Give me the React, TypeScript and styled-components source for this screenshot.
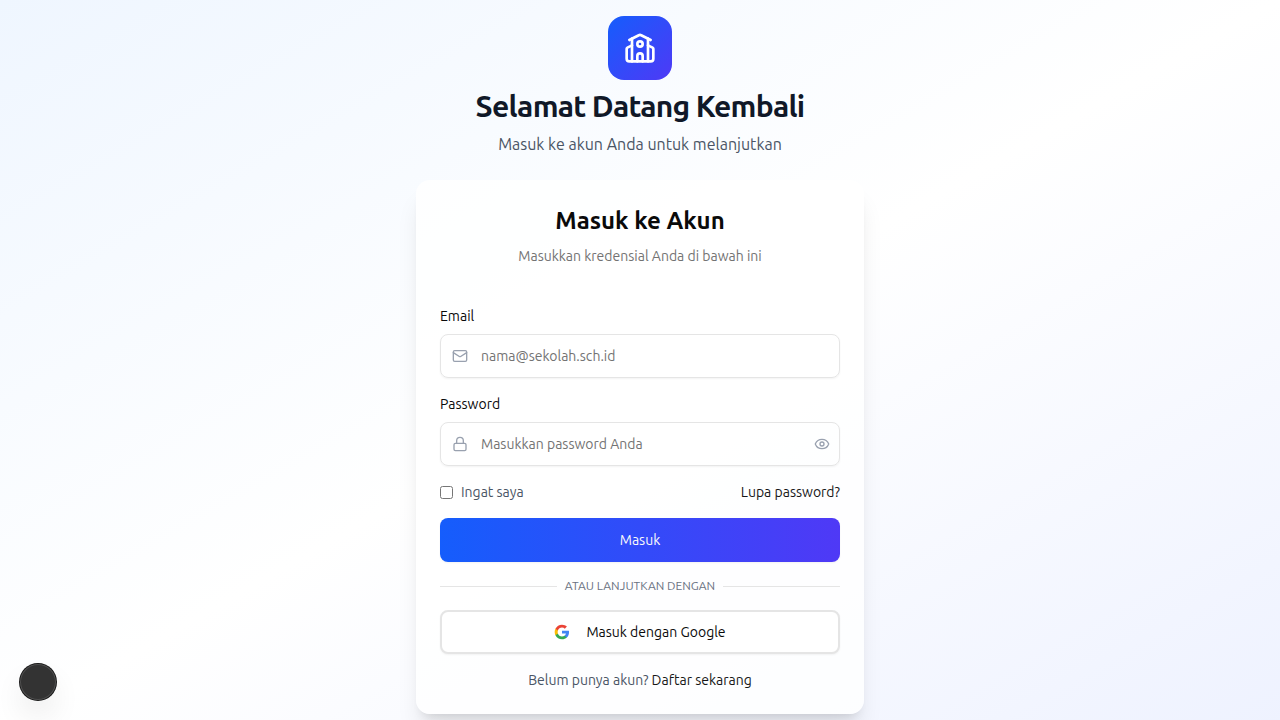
import React, { useState } from "react";
import styled, { createGlobalStyle } from "styled-components";
import { Eye, Lock, Mail } from "lucide-react";

const GlobalStyle = createGlobalStyle`
  *, *::before, *::after { box-sizing: border-box; }
  body {
    margin: 0;
    font-family: Ubuntu, "Noto Sans", sans-serif;
    font-size: 14px;
    line-height: 20px;
    color: #0a0a0a;
  }
  h1, h2, p { margin: 0; }
  button, input { font: inherit; color: inherit; }
`;

const Page = styled.main`
  min-height: 100vh;
  padding: 16px;
  display: flex;
  flex-direction: column;
  align-items: center;
  justify-content: center;
  background: linear-gradient(to bottom right, #eff6ff, #ffffff, #eef2ff);
`;

const Column = styled.div`
  width: 100%;
  max-width: 448px;
`;

const Intro = styled.header`
  display: flex;
  flex-direction: column;
  align-items: center;
  gap: 8px;
  margin-bottom: 24px;
  text-align: center;
`;

const Logo = styled.div`
  display: flex;
  align-items: center;
  justify-content: center;
  width: 64px;
  height: 64px;
  border-radius: 16px;
  color: #ffffff;
  background: linear-gradient(to bottom right, #155dfc, #4f39f6);
`;

const PageTitle = styled.h1`
  font-size: 30px;
  line-height: 36px;
  font-weight: 700;
  letter-spacing: -0.025em;
  color: #101828;
`;

const PageSubtitle = styled.p`
  font-size: 16px;
  line-height: 24px;
  color: #4a5565;
`;

const Card = styled.section`
  padding: 24px;
  border-radius: 14px;
  background: rgba(255, 255, 255, 0.8);
  box-shadow: 0 20px 25px -5px rgba(0, 0, 0, 0.1), 0 8px 10px -6px rgba(0, 0, 0, 0.1);
`;

const CardHeader = styled.div`
  display: flex;
  flex-direction: column;
  gap: 8px;
  margin-bottom: 40px;
  text-align: center;
`;

const CardTitle = styled.h2`
  font-size: 24px;
  line-height: 34px;
  font-weight: 700;
`;

const CardText = styled.p`
  color: #737373;
`;

const Form = styled.form`
  display: flex;
  flex-direction: column;
  gap: 16px;
`;

const Field = styled.div`
  display: flex;
  flex-direction: column;
  gap: 8px;
`;

const Label = styled.label`
  font-weight: 400;
`;

const InputBox = styled.div`
  display: flex;
  align-items: center;
  height: 44px;
  padding: 0 9px 0 11px;
  border: 1px solid #e5e5e5;
  border-radius: 8px;
  color: #99a1af;
  box-shadow: 0 1px 2px rgba(0, 0, 0, 0.05);
`;

const Input = styled.input`
  flex: 1;
  min-width: 0;
  margin-left: 13px;
  padding: 0;
  border: 0;
  outline: 0;
  background: transparent;
  color: #0a0a0a;
  &::placeholder { color: #737373; opacity: 1; }
`;

const IconButton = styled.button`
  display: flex;
  padding: 0;
  border: 0;
  background: none;
  cursor: pointer;
`;

const OptionsRow = styled.div`
  display: flex;
  align-items: center;
  justify-content: space-between;
`;

const Remember = styled.label`
  display: flex;
  align-items: center;
  gap: 8px;
  color: #4a5565;
`;

const Checkbox = styled.input`
  width: 13px;
  height: 13px;
  margin: 0;
`;

const Link = styled.a`
  color: #171717;
  text-decoration: none;
`;

const Button = styled.button<{ $outline?: boolean }>`
  display: flex;
  align-items: center;
  justify-content: center;
  gap: 16px;
  width: 100%;
  height: 44px;
  border-radius: 8px;
  border: ${(p) => (p.$outline ? "2px solid #e5e5e5" : "0")};
  color: ${(p) => (p.$outline ? "#0a0a0a" : "#fafafa")};
  background: ${(p) => (p.$outline ? "#ffffff" : "linear-gradient(to right, #155dfc, #4f39f6)")};
  box-shadow: 0 1px 2px rgba(0, 0, 0, 0.05);
  cursor: pointer;
`;

const Divider = styled.div`
  display: flex;
  align-items: center;
  gap: 8px;
  font-size: 12px;
  line-height: 16px;
  text-transform: uppercase;
  color: #6a7282;
  &::before, &::after {
    content: "";
    flex: 1;
    height: 1px;
    background: #e5e5e5;
  }
`;

const Footer = styled.p`
  text-align: center;
  color: #4a5565;
`;

const DevButton = styled.button`
  position: fixed;
  left: 20px;
  bottom: 20px;
  width: 36px;
  height: 36px;
  padding: 0;
  border: 0;
  border-radius: 50%;
  background: #333333;
  box-shadow: 0 0 0 1px #171717, inset 0 0 0 1px rgba(255, 255, 255, 0.14),
    0 16px 32px -8px rgba(0, 0, 0, 0.24);
`;

const SchoolIcon = () => (
  <svg
    width="32"
    height="32"
    viewBox="0 0 24 24"
    fill="none"
    stroke="currentColor"
    strokeWidth="2"
    strokeLinecap="round"
    strokeLinejoin="round"
    aria-hidden="true"
  >
    <path d="M14 22v-4a2 2 0 1 0-4 0v4" />
    <path d="m18 10 3.447 1.724a1 1 0 0 1 .553.894V20a2 2 0 0 1-2 2H4a2 2 0 0 1-2-2v-7.382a1 1 0 0 1 .553-.894L6 10" />
    <path d="M18 5v17" />
    <path d="m4 6 7.106-3.553a2 2 0 0 1 1.788 0L20 6" />
    <path d="M6 5v17" />
    <circle cx="12" cy="9" r="2" />
  </svg>
);

const GoogleLogo = () => (
  <svg width="16" height="16" viewBox="0 0 24 24" aria-hidden="true">
    <path fill="#4285F4" d="M22.56 12.25c0-.78-.07-1.53-.2-2.25H12v4.26h5.92c-.26 1.37-1.04 2.53-2.21 3.31v2.77h3.57c2.08-1.92 3.28-4.74 3.28-8.09z" />
    <path fill="#34A853" d="M12 23c2.97 0 5.46-.98 7.28-2.66l-3.57-2.77c-.98.66-2.23 1.06-3.71 1.06-2.86 0-5.29-1.93-6.16-4.53H2.18v2.84C3.99 20.53 7.7 23 12 23z" />
    <path fill="#FBBC05" d="M5.84 14.09c-.22-.66-.35-1.36-.35-2.09s.13-1.43.35-2.09V7.07H2.18C1.43 8.55 1 10.22 1 12s.43 3.45 1.18 4.93l3.66-2.84z" />
    <path fill="#EA4335" d="M12 5.38c1.62 0 3.06.56 4.21 1.64l3.15-3.15C17.45 2.09 14.97 1 12 1 7.7 1 3.99 3.47 2.18 7.07l3.66 2.84c.87-2.6 3.3-4.53 6.16-4.53z" />
  </svg>
);

export default function App() {
  const [visible, setVisible] = useState(false);
  return (
    <>
      <GlobalStyle />
      <Page>
        <Column>
          <Intro>
            <Logo><SchoolIcon /></Logo>
            <PageTitle>Selamat Datang Kembali</PageTitle>
            <PageSubtitle>Masuk ke akun Anda untuk melanjutkan</PageSubtitle>
          </Intro>
          <Card>
            <CardHeader>
              <CardTitle>Masuk ke Akun</CardTitle>
              <CardText>Masukkan kredensial Anda di bawah ini</CardText>
            </CardHeader>
            <Form onSubmit={(e) => e.preventDefault()}>
              <Field>
                <Label htmlFor="email">Email</Label>
                <InputBox>
                  <Mail size={16} />
                  <Input id="email" type="email" placeholder="nama@sekolah.sch.id" />
                </InputBox>
              </Field>
              <Field>
                <Label htmlFor="password">Password</Label>
                <InputBox>
                  <Lock size={16} />
                  <Input id="password" type={visible ? "text" : "password"} placeholder="Masukkan password Anda" />
                  <IconButton type="button" aria-label="Tampilkan password" onClick={() => setVisible(!visible)}>
                    <Eye size={16} />
                  </IconButton>
                </InputBox>
              </Field>
              <OptionsRow>
                <Remember>
                  <Checkbox type="checkbox" />
                  Ingat saya
                </Remember>
                <Link href="#lupa-password">Lupa password?</Link>
              </OptionsRow>
              <Button type="submit">Masuk</Button>
              <Divider>Atau lanjutkan dengan</Divider>
              <Button type="button" $outline>
                <GoogleLogo />
                Masuk dengan Google
              </Button>
              <Footer>
                Belum punya akun? <Link href="#daftar">Daftar sekarang</Link>
              </Footer>
            </Form>
          </Card>
        </Column>
      </Page>
      <DevButton type="button" aria-label="Menu" />
    </>
  );
}
